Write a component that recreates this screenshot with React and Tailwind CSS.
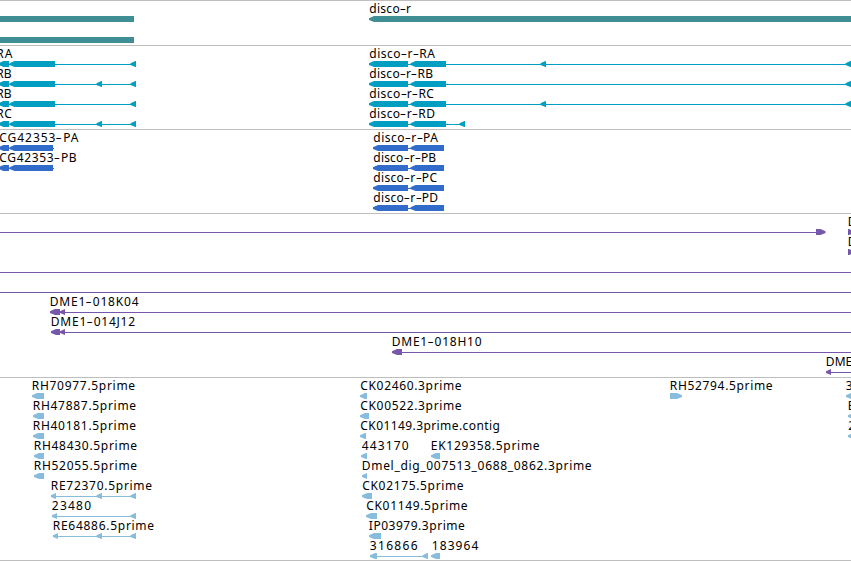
import { useMemo } from 'react';

const GENE = '#3f8e93';
const RNA = '#009fc1';
const CDS = '#316ccb';
const BAC = '#7757aa';
const EST = '#87bcdd';

// Label: [text, start, end].  Exon: [start, end, direction].  Line: [start, end].
const l = (text, start, end) => ({ text, start, end });

const rnaLeft = (withMiddle) => [
  [-1.5, 9, 'l'], [9.5, 55, 'l'], [130.5, 136, 'l'],
  ...(withMiddle ? [[96.5, 102, 'l']] : []),
];
const rnaRight = (withMiddle) => [
  [369, 408, 'l'], [410.5, 446, 'l'], [845.5, 856, 'l'],
  ...(withMiddle ? [[540.5, 546, 'l']] : []),
];
const cdsLeft = [[-1.5, 9, 'l'], [9.5, 53, 'l']];
const cdsRight = [[373, 408, 'l'], [410.5, 444, 'l']];

const tracks = [
  {
    name: 'gene', color: GENE, className: 'h-[45px] gap-px',
    rows: [
      { labels: [l('disco-r', 369, 411)], exons: [[-5, 134], [369, 860, 'l']] },
      { exons: [[-5, 134]] },
    ],
  },
  {
    name: 'mrna', color: RNA, className: 'h-[84px]',
    rows: [
      { labels: [l('RA', -4, 13), l('disco-r-RA', 369, 435)], exons: [...rnaLeft(false), ...rnaRight(true)], lines: [[0, 135], [370, 851]] },
      { labels: [l('RB', -4, 11), l('disco-r-RB', 369, 433)], exons: [...rnaLeft(true), ...rnaRight(false)], lines: [[0, 135], [370, 851]] },
      { labels: [l('RB', -4, 11), l('disco-r-RC', 369, 434)], exons: [...rnaLeft(false), ...rnaRight(true)], lines: [[0, 135], [370, 851]] },
      { labels: [l('RC', -4, 12), l('disco-r-RD', 369, 435)], exons: [...rnaLeft(true), [369, 408, 'l'], [410.5, 446, 'l'], [459.5, 465, 'l']], lines: [[0, 135], [370, 464]] },
    ],
  },
  {
    name: 'cds', color: CDS, className: 'h-[84px]',
    rows: [
      { labels: [l('CG42353-PA', -1, 79), l('disco-r-PA', 373, 438)], exons: [...cdsLeft, ...cdsRight], lines: [[0, 54], [374, 444]] },
      { labels: [l('CG42353-PB', -1, 77), l('disco-r-PB', 373, 436)], exons: [...cdsLeft, ...cdsRight], lines: [[0, 54], [374, 444]] },
      { labels: [l('disco-r-PC', 373, 437)], exons: cdsRight, lines: [[374, 444]] },
      { labels: [l('disco-r-PD', 373, 438)], exons: cdsRight, lines: [[374, 444]] },
    ],
  },
  {
    name: 'bac', color: BAC, className: 'h-[164px]',
    rows: [
      { labels: [l('D', 847.5, 856.5)], exons: [[816, 825.5, 'r'], [848, 854, 'r']], lines: [[0, 820]] },
      { labels: [l('D', 847.5, 856.5)], exons: [[848, 854, 'r']] },
      { lines: [[0, 851]] },
      { lines: [[0, 851]] },
      { labels: [l('DME1-018K04', 49.5, 139)], exons: [[50, 60, 'l'], [60, 65, 'l']], lines: [[51, 851]] },
      { labels: [l('DME1-014J12', 50.5, 135.5)], exons: [[51, 60, 'l'], [60, 65, 'l']], lines: [[52, 851]] },
      { labels: [l('DME1-018H10', 391.5, 482)], exons: [[392, 402, 'l']], lines: [[393, 851]] },
      { labels: [l('DME1', 825.5, 859)], exons: [[826, 831, 'l']], lines: [[827, 851]] },
    ],
  },
  {
    name: 'est', color: EST, className: 'h-[184px] border-b',
    rows: [
      { labels: [l('RH70977.5prime', 31.5, 135.5), l('CK02460.3prime', 360, 462), l('RH52794.5prime', 669.5, 773), l('3', 845.5, 853.5)], exons: [[32, 44, 'l'], [360, 367, 'l'], [670, 682, 'r'], [846, 856, 'l']] },
      { labels: [l('RH47887.5prime', 32.5, 136.5), l('CK00522.3prime', 360, 462), l('E', 847.5, 854.5)], exons: [[33, 44, 'l'], [360, 369, 'l'], [848, 858, 'l']] },
      { labels: [l('RH40181.5prime', 32.5, 136.5), l('CK01149.3prime.contig', 360, 500), l('2', 848, 856)], exons: [[33, 44, 'l'], [360, 366, 'l'], [848, 858, 'l']] },
      { labels: [l('RH48430.5prime', 33.5, 137.5), l('443170', 361.5, 409.5), l('EK129358.5prime', 430.5, 540)], exons: [[34, 44, 'l'], [361, 367, 'l'], [431, 440, 'l']] },
      { labels: [l('RH52055.5prime', 33.5, 137.5), l('Dmel_dig_007513_0688_0862.3prime', 361.5, 592)], exons: [[34, 44, 'l'], [362, 367, 'l']] },
      { labels: [l('RE72370.5prime', 50.5, 152.5), l('CK02175.5prime', 362, 464)], exons: [[51, 56, 'l'], [96.5, 102, 'l'], [130.5, 136, 'l'], [362, 372, 'l']], lines: [[53, 135]] },
      { labels: [l('23480', 51.5, 92), l('CK01149.5prime', 366, 468)], exons: [[52, 57, 'l'], [130.5, 136, 'l'], [366, 377, 'l']], lines: [[54, 135]] },
      { labels: [l('RE64886.5prime', 52.5, 154.5), l('IP03979.3prime', 368.5, 465)], exons: [[53, 58, 'l'], [96.5, 102, 'l'], [130.5, 136, 'l'], [369, 381, 'l']], lines: [[55, 135]] },
      { labels: [l('316866', 369.5, 418.5), l('183964', 431.5, 479)], exons: [[370, 377, 'l'], [422.5, 428, 'l'], [431, 440, 'l']], lines: [[371, 427]] },
    ],
  },
];

function exonPoints([a, b, dir]) {
  const tip = Math.min(5, b - a);
  if (dir === 'l') return `${a},4 ${a},2.2 ${a + tip},0 ${b},0 ${b},6 ${a + tip},6`;
  if (dir === 'r') return `${a},0 ${b - tip},0 ${b},2.2 ${b},4 ${b - tip},6 ${a},6`;
  return `${a},0 ${b},0 ${b},6 ${a},6`;
}

function Label({ text, start, end, ctx }) {
  const parts = text.split('-');
  const dashRoom = (parts.length - 1) * 2;
  const tracking = (end - start - dashRoom - ctx.measureText(text).width) / text.length;
  return (
    <span
      className="col-start-1 row-start-1 justify-self-start whitespace-pre"
      style={{ marginLeft: start + 0.3, letterSpacing: `${tracking}px` }}
    >
      {parts.map((part, i) => (
        <span key={i}>
          {i > 0 && <span className="mx-px inline-block scale-x-[1.6]">-</span>}
          {part}
        </span>
      ))}
    </span>
  );
}

function Row({ labels = [], exons = [], lines = [], color, ctx }) {
  return (
    <div className="flex h-5 w-[851px] flex-col">
      <div className="z-10 grid h-3.5 grid-cols-[851px] text-[12px] leading-[13px]">
        {labels.map((label) => (
          <Label key={label.start} {...label} ctx={ctx} />
        ))}
      </div>
      <svg className="block h-1.5 w-[851px]" viewBox="0 0 851 6" fill={color}>
        {lines.map(([a, b]) => (
          <rect key={a} x={a} y="3" width={b - a} height="1" />
        ))}
        {exons.map((exon) => (
          <polygon key={exon[0]} points={exonPoints(exon)} />
        ))}
      </svg>
    </div>
  );
}

export default function App() {
  const ctx = useMemo(() => {
    const context = document.createElement('canvas').getContext('2d');
    context.font = '12px "Noto Sans"';
    return context;
  }, []);
  return (
    <main className="flex h-[561px] w-[851px] flex-col overflow-hidden bg-white font-['Noto_Sans',sans-serif] text-black">
      {tracks.map((track) => (
        <section
          key={track.name}
          className={`flex shrink-0 flex-col border-t border-[#bebebe] pt-px ${track.className}`}
        >
          {track.rows.map((row, i) => (
            <Row key={i} {...row} color={track.color} ctx={ctx} />
          ))}
        </section>
      ))}
    </main>
  );
}
